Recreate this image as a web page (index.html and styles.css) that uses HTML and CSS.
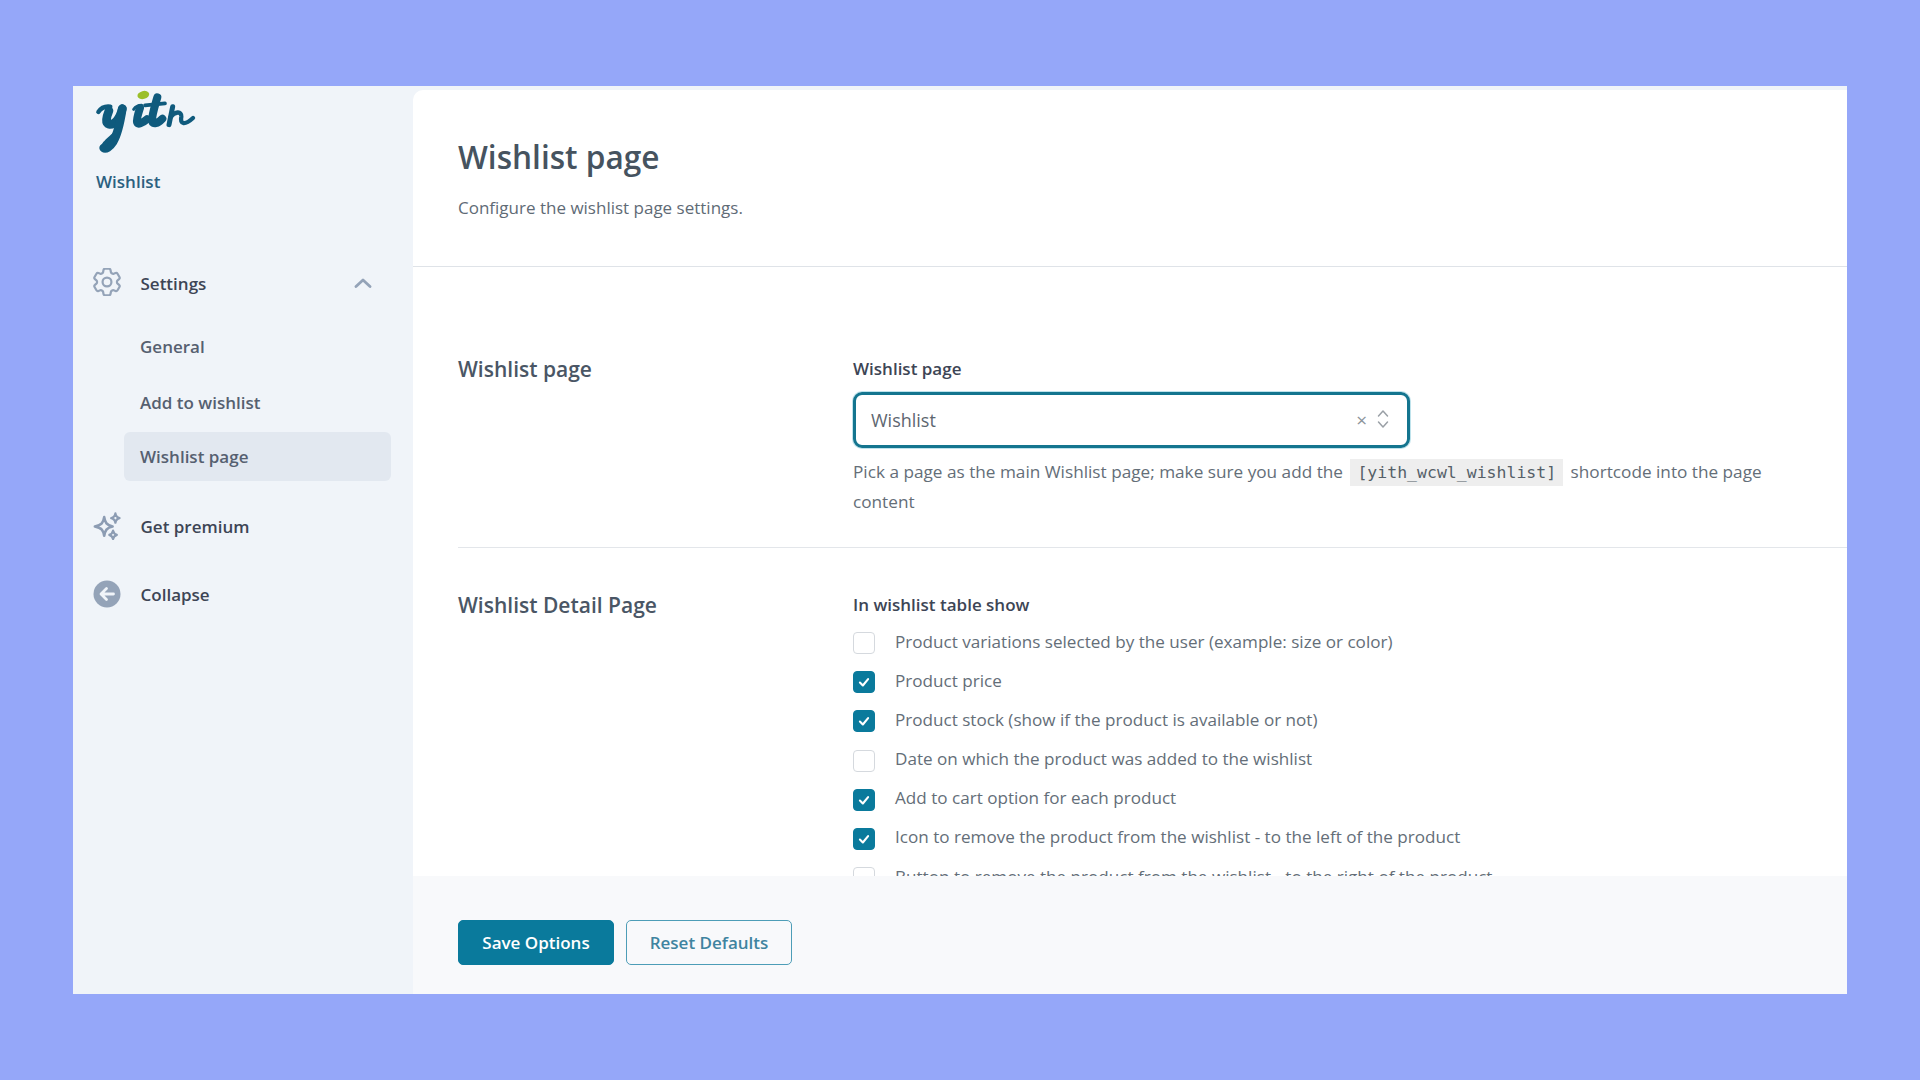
FILE: index.html
```html
<!DOCTYPE html>
<html lang="en">
<head>
    <meta charset="UTF-8">
    <title>Wishlist page</title>
    <link rel="stylesheet" href="styles.css">
</head>
<body>
    <div class="window">
        <aside class="sidebar">
            <svg class="logo" viewBox="0 18 360 222" width="120" height="74" aria-label="yith">
                <g fill="none" stroke="#0f5a7d" stroke-linecap="round" stroke-linejoin="round">
                    <path stroke-width="13" d="M40 96C48 84 62 78 76 80"/>
                    <path stroke-width="26" d="M72 92C64 112 60 130 72 133C88 136 104 118 112 86"/>
                    <path stroke-width="26" d="M112 86C106 125 100 160 84 186C74 202 62 208 56 204"/>
                    <path stroke-width="14" d="M54 204C54 190 78 176 102 150"/>
                    <path stroke-width="9" d="M146 88C152 80 160 76 170 76"/>
                    <path stroke-width="24" d="M165 84C160 100 154 118 156 126C159 135 172 130 186 118"/>
                    <path stroke-width="24" d="M217 52C209 80 200 108 201 123C204 135 218 131 232 116"/>
                    <path stroke-width="11" d="M180 76L240 70"/>
                    <path stroke-width="15" d="M263 80L252 134"/>
                    <path stroke-width="13" d="M256 112C270 94 290 92 289 110C284 134 300 136 324 114"/>
                </g>
                <ellipse cx="175" cy="45" rx="18" ry="12" fill="#9bbf2a" transform="rotate(-15 175 45)"/>
            </svg>
            <div class="plugin-name">Wishlist</div>

            <nav class="nav">
                <div class="nav-row">
                    <svg class="nav-icon gear" viewBox="2.500 2.500 19 19" fill="none" stroke="#94a3b8" stroke-width="1.500" stroke-linejoin="round">
                        <path d="M9.594 3.94c.09-.542.56-.94 1.11-.94h2.593c.55 0 1.02.398 1.11.94l.213 1.281c.063.374.313.686.645.87.074.04.147.083.22.127.325.196.72.257 1.075.124l1.217-.456a1.125 1.125 0 011.37.49l1.296 2.247a1.125 1.125 0 01-.26 1.431l-1.003.827c-.293.241-.438.613-.43.992a7.723 7.723 0 010 .255c-.008.378.137.75.43.991l1.004.827c.424.35.534.955.26 1.43l-1.298 2.247a1.125 1.125 0 01-1.369.491l-1.217-.456c-.355-.133-.75-.072-1.076.124a6.47 6.47 0 01-.22.128c-.331.183-.581.495-.644.869l-.213 1.281c-.09.543-.56.94-1.11.94h-2.594c-.55 0-1.019-.398-1.11-.94l-.213-1.281c-.062-.374-.312-.686-.644-.87a6.52 6.52 0 01-.22-.127c-.325-.196-.72-.257-1.076-.124l-1.217.456a1.125 1.125 0 01-1.369-.49l-1.297-2.247a1.125 1.125 0 01.26-1.431l1.004-.827c.292-.24.437-.613.43-.991a6.932 6.932 0 010-.255c.007-.38-.138-.751-.43-.992l-1.004-.827a1.125 1.125 0 01-.26-1.43l1.297-2.247a1.125 1.125 0 011.37-.491l1.216.456c.356.133.751.072 1.076-.124.072-.044.146-.086.22-.128.332-.183.582-.495.644-.869l.214-1.28z"/>
                        <circle cx="12" cy="12" r="3"/>
                    </svg>
                    <span class="nav-label">Settings</span>
                    <svg class="chevron" viewBox="0 0 18 10" fill="none" stroke="#94a3b8" stroke-width="2.800" stroke-linecap="round" stroke-linejoin="round">
                        <path d="M2 8.500L9 2l7 6.500"/>
                    </svg>
                </div>
                <div class="subnav">
                    <div class="subnav-item">General</div>
                    <div class="subnav-item add">Add to wishlist</div>
                    <div class="subnav-item active">Wishlist page</div>
                </div>
                <div class="nav-row">
                    <svg class="nav-icon" viewBox="1 0.500 30 30" fill="none" stroke="#8c9cb3" stroke-width="2.800" stroke-linejoin="round">
                        <path d="M13 6C14 12 15.500 14.500 22 16C15.500 17.500 14 20 13 26C12 20 10.500 17.500 3 16C10.500 14.500 12 12 13 6Z"/>
                        <path d="M25 2C25.500 5 26.500 6.500 29.500 7C26.500 7.500 25.500 9 25 12C24.500 9 23.500 7.500 20.500 7C23.500 6.500 24.500 5 25 2Z" stroke-width="2.400"/>
                        <path d="M22.500 20.500C23 23 24 24 26.500 25C24 26 23 27 22.500 29.500C22 27 21 26 18.500 25C21 24 22 23 22.500 20.500Z" stroke-width="2.400"/>
                    </svg>
                    <span class="nav-label">Get premium</span>
                </div>
                <div class="nav-row">
                    <svg class="nav-icon" viewBox="0 0 28 28">
                        <circle cx="14" cy="14" r="13.500" fill="#94a3b8"/>
                        <path d="M20.500 14H8.500M13.500 8.500L8 14l5.500 5.500" fill="none" stroke="#f0f4f9" stroke-width="2.800" stroke-linecap="round" stroke-linejoin="round"/>
                    </svg>
                    <span class="nav-label">Collapse</span>
                </div>
            </nav>
        </aside>

        <main class="panel">
            <div class="panel-scroll">
                <header class="panel-head">
                    <h1>Wishlist page</h1>
                    <p>Configure the wishlist page settings.</p>
                </header>

                <section class="section first">
                    <h2>Wishlist page</h2>
                    <div class="field">
                        <div class="field-label">Wishlist page</div>
                        <div class="select">
                            <span class="select-value">Wishlist</span>
                            <span class="select-clear">×</span>
                            <svg class="select-arrows" viewBox="0 0 12 20" fill="none" stroke="#9aa0a6" stroke-width="1.500" stroke-linecap="round" stroke-linejoin="round">
                                <path d="M1.500 7L6 2l4.500 5M1.500 13L6 18l4.500-5"/>
                            </svg>
                        </div>
                        <p class="help">Pick a page as the main Wishlist page; make sure you add the <code>[yith_wcwl_wishlist]</code> shortcode into the page content</p>
                    </div>
                </section>

                <section class="section second">
                    <h2>Wishlist Detail Page</h2>
                    <div class="field">
                        <div class="field-label">In wishlist table show</div>
                        <div class="checks">
                            <div class="check-row"><span class="box"></span><span class="check-text">Product variations selected by the user (example: size or color)</span></div>
                            <div class="check-row"><span class="box on"><svg viewBox="0 0 12 12"><path d="M2.500 6.500L5 9l4.500-5.500"/></svg></span><span class="check-text">Product price</span></div>
                            <div class="check-row"><span class="box on"><svg viewBox="0 0 12 12"><path d="M2.500 6.500L5 9l4.500-5.500"/></svg></span><span class="check-text">Product stock (show if the product is available or not)</span></div>
                            <div class="check-row"><span class="box"></span><span class="check-text">Date on which the product was added to the wishlist</span></div>
                            <div class="check-row"><span class="box on"><svg viewBox="0 0 12 12"><path d="M2.500 6.500L5 9l4.500-5.500"/></svg></span><span class="check-text">Add to cart option for each product</span></div>
                            <div class="check-row"><span class="box on"><svg viewBox="0 0 12 12"><path d="M2.500 6.500L5 9l4.500-5.500"/></svg></span><span class="check-text">Icon to remove the product from the wishlist - to the left of the product</span></div>
                            <div class="check-row"><span class="box"></span><span class="check-text">Button to remove the product from the wishlist - to the right of the product</span></div>
                        </div>
                    </div>
                </section>
            </div>

            <footer class="panel-foot">
                <button class="btn btn-save">Save Options</button>
                <button class="btn btn-reset">Reset Defaults</button>
            </footer>
        </main>
    </div>
</body>
</html>
```

FILE: styles.css
```css
body {
    margin: 0;
    height: 1080px;
    box-sizing: border-box;
    padding: 86px 73px;
    background-color: #95a7f9;
    font-family: "Open Sans", sans-serif;
    overflow: hidden;
}
.window {
    display: flex;
    height: 908px;
    background-color: #f0f4f9;
}

/* sidebar */
.sidebar {
    width: 340px;
    flex-shrink: 0;
}
.logo {
    display: block;
    margin-left: 12px;
}
.plugin-name {
    margin: 10px 0 0 23px;
    font-size: 17px;
    line-height: 24px;
    font-weight: 600;
    color: #2b6080;
}
.nav {
    margin-top: 67px;
    display: flex;
    flex-direction: column;
}
.nav-row {
    display: flex;
    align-items: center;
    height: 44px;
    padding-left: 20px;
    margin-bottom: 24px;
}
.nav-row:first-child {
    margin-bottom: 17px;
}
.nav-icon {
    width: 28px;
    height: 28px;
    flex-shrink: 0;
    margin-right: 19.5px;
}
.gear {
    margin-top: -2px;
}
.nav-label {
    font-size: 17px;
    font-weight: 600;
    color: #3d4555;
}
.chevron {
    width: 18px;
    height: 10px;
    margin-left: auto;
    margin-right: 41px;
    margin-top: -1px;
}
.subnav {
    display: flex;
    flex-direction: column;
    gap: 6px;
    margin: 0 0 23px 51px;
    width: 267px;
}
.subnav-item {
    height: 49px;
    line-height: 49px;
    padding-left: 16px;
    font-size: 17px;
    font-weight: 600;
    color: #566070;
    border-radius: 6px;
}
.subnav-item.add {
    line-height: 51px;
}
.subnav-item.active {
    background-color: #e2e8f0;
}

/* main panel */
.panel {
    flex: 1;
    margin-top: 4px;
    display: flex;
    flex-direction: column;
    background-color: #fff;
    border-top-left-radius: 10px;
    overflow: hidden;
}
.panel-scroll {
    flex: 1;
    min-height: 0;
    overflow: hidden;
}
.panel-head {
    height: 177px;
    box-sizing: border-box;
    padding: 45px 45px 0;
    border-bottom: 1px solid #dfe3e8;
}
.panel-head h1 {
    margin: 0;
    font-size: 31.6px;
    line-height: 44px;
    font-weight: 600;
    color: #46535f;
}
.panel-head p {
    margin: 17px 0 0;
    font-size: 17px;
    line-height: 24px;
    color: #5f6b76;
}
.section {
    display: grid;
    grid-template-columns: 395px 1fr;
    margin-left: 45px;
}
.section.first {
    padding: 90px 0 30px;
    border-bottom: 1px solid #e3e6ea;
}
.section.second {
    padding-top: 45px;
}
.section h2 {
    margin: 0;
    font-size: 21px;
    line-height: 24px;
    font-weight: 600;
    color: #4a5665;
}
.field-label {
    font-size: 17px;
    line-height: 24px;
    font-weight: 600;
    color: #3d4555;
}
.select {
    display: flex;
    align-items: center;
    box-sizing: border-box;
    width: 557px;
    height: 56px;
    margin-top: 11px;
    padding: 0 18px 0 15px;
    border: 3px solid #14758f;
    border-radius: 9px;
    box-shadow: 0 0 0 1px #bfe3ec;
}
.select-value {
    flex: 1;
    font-size: 18px;
    color: #5d6670;
}
.select-clear {
    font-size: 19px;
    color: #8d949b;
    margin-right: 10px;
}
.select-arrows {
    width: 12px;
    height: 20px;
    margin-top: -2px;
}
.help {
    margin: 9px 0 0;
    padding-right: 60px;
    font-size: 17.2px;
    line-height: 30px;
    color: #646e78;
}
.help code {
    margin: 0 3px;
    padding: 4px 7px;
    background-color: #eee;
    font-family: "DejaVu Sans Mono", monospace;
    font-size: 16.5px;
    line-height: 1;
    color: #555f68;
}
.checks {
    margin-top: 15px;
    display: flex;
    flex-direction: column;
    gap: 17.2px;
}
.check-row {
    display: flex;
    align-items: center;
    height: 22px;
    font-size: 17.1px;
    color: #646e78;
    white-space: nowrap;
}
.check-text {
    margin-top: -4px;
}
.box {
    display: flex;
    align-items: center;
    justify-content: center;
    box-sizing: border-box;
    width: 22px;
    height: 22px;
    margin-right: 20px;
    flex-shrink: 0;
    border: 1px solid #d5d9de;
    border-radius: 4px;
    background-color: #fff;
}
.box.on {
    background-color: #0a7a9c;
    border-color: #0a7a9c;
}
.box svg {
    width: 14px;
    height: 14px;
    fill: none;
    stroke: #fff;
    stroke-width: 1.800;
    stroke-linecap: round;
    stroke-linejoin: round;
}

/* footer */
.panel-foot {
    flex-shrink: 0;
    height: 118px;
    box-sizing: border-box;
    padding: 44px 0 0 45px;
    display: flex;
    align-items: flex-start;
    gap: 12px;
    background-color: #f8f9fb;
}
.btn {
    height: 45px;
    padding: 0;
    border-radius: 5px;
    font-family: "Open Sans", sans-serif;
    font-size: 17px;
    font-weight: 600;
}
.btn-save {
    width: 156px;
    border: 1px solid #0a7a9c;
    background-color: #0a7a9c;
    color: #fff;
}
.btn-reset {
    width: 166px;
    border: 1px solid #4d9db7;
    background-color: transparent;
    color: #3f84a0;
}
```
